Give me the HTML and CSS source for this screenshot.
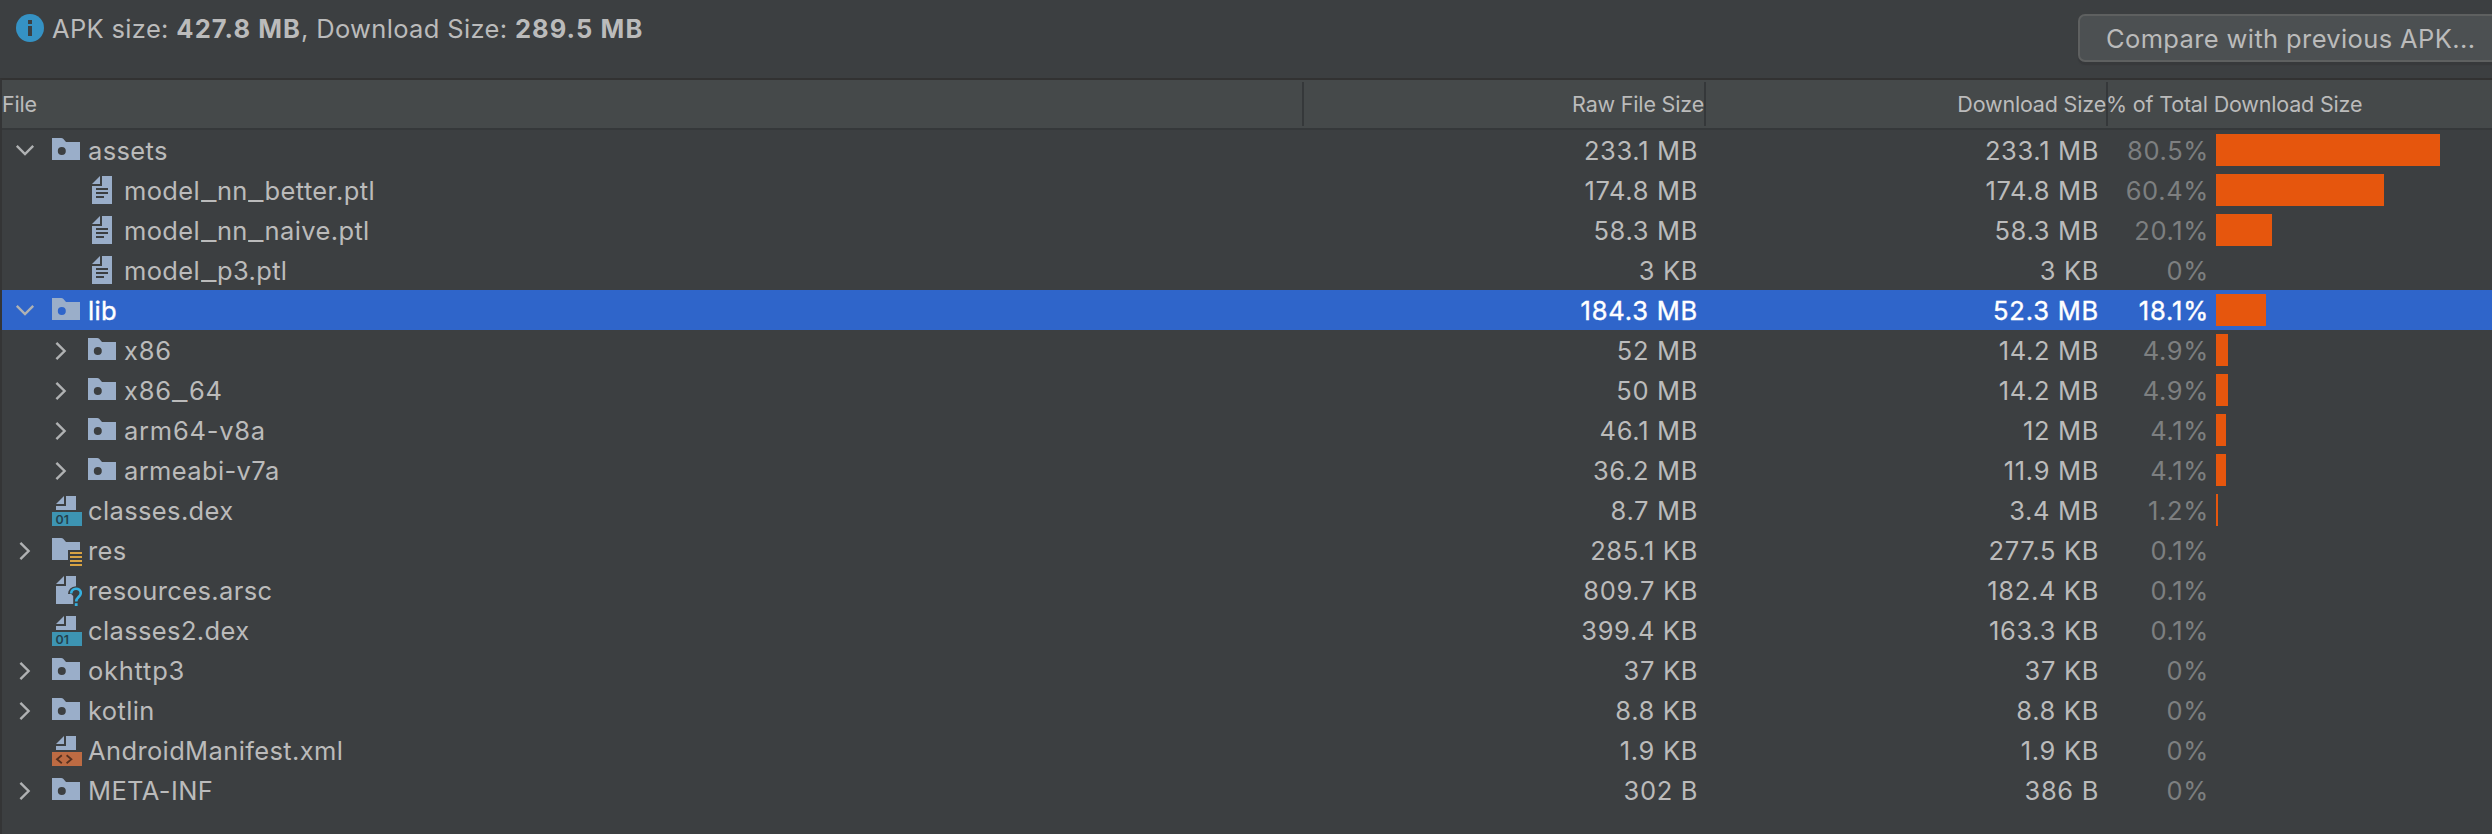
FILE: index.html
```html
<!DOCTYPE html>
<html lang="en">
<head>
<meta charset="utf-8">
<title>APK Analyzer</title>
<link rel="stylesheet" href="styles.css">
</head>
<body>
<svg class="defs" width="0" height="0" aria-hidden="true">
  <symbol id="folder" viewBox="0 0 16 16"><path fill-rule="evenodd" d="M1 2h4.6q.6 0 1 .4L8 4h7v9H1zM5.900 6.500a2 2 0 1 0 0 4a2 2 0 1 0 0-4z"/></symbol>
  <symbol id="file" viewBox="0 0 16 16"><path fill-rule="evenodd" d="M7 1v4H3zM8 1h5v14H3V6h5zM5 7v1h6V7zM5 9v1h6V9zM5 11v1h4v-1z"/></symbol>
  <symbol id="dex" viewBox="0 0 16 16"><path d="M7 1v4H3zM8 1h5v7H3V6h5z"/><path fill="#3d94b2" d="M1 9h15v7H1z"/></symbol>
  <symbol id="res" viewBox="0 0 16 16"><path d="M1 2h4.6q.6 0 1 .4L8 4h7v4H9v5H1z"/><path fill="#d9a343" d="M10 9h6v1h-6zM10 11h6v1h-6zM10 13h6v1h-6zM10 15h6v1h-6z"/></symbol>
  <symbol id="arsc" viewBox="0 0 16 16"><path d="M7 1v4H3zM8 1h5v5.1Q9.3 6.3 9 10h1.6l1 1V15H3V6h5z"/><path class="query" d="M10.600 9.800c0-3.200 4.800-3.200 4.800-.3 0 2-2.300 2-2.300 4.200"/><path fill="#35b1e0" d="M12.400 14.600h1.400V16h-1.400z"/></symbol>
  <symbol id="xml" viewBox="0 0 16 16"><path d="M7 1v4H3zM8 1h5v7H3V6h5z"/><path fill="#bd6b43" d="M1 9h15v7H1z"/><path class="tag" d="M5.900 10.600L3.500 12.600l2.400 2M8.300 10.600l2.400 2-2.400 2"/></symbol>
  <symbol id="down" viewBox="0 0 16 16"><path class="chev" d="M3.900 5.900L8 10l4.100-4.100"/></symbol>
  <symbol id="right" viewBox="0 0 16 16"><path class="chev" d="M5.700 4.400L9.800 8.500l-4.100 4.100"/></symbol>
</svg>

<header class="top">
  <svg class="info" viewBox="0 0 28 28"><circle cx="14" cy="14" r="14" fill="#3592c4"/><path fill="#3c3f41" d="M12 6h4v4h-4zM12 12h4v10h-4z"/></svg>
  <p class="summary">APK size: <b>427.8 MB</b>, Download Size: <b>289.5 MB</b></p>
  <button class="compare">Compare with previous APK...</button>
</header>

<main class="tree">
  <div class="head"><span class="h">File</span><span class="h num">Raw File Size</span><span class="h num">Download Size</span><span class="h">% of Total Download Size</span></div>
  <div class="row"><div class="name"><svg class="arrow"><use href="#down"/></svg><svg class="icon"><use href="#folder"/></svg>assets</div><div class="size">233.1 MB</div><div class="size">233.1 MB</div><div class="pct">80.5%</div><div class="bar" style="width:224px"></div></div>
  <div class="row"><div class="name sub"><svg class="arrow"></svg><svg class="icon"><use href="#file"/></svg><span>model<i>_</i>nn<i>_</i>better.ptl</span></div><div class="size">174.8 MB</div><div class="size">174.8 MB</div><div class="pct">60.4%</div><div class="bar" style="width:168px"></div></div>
  <div class="row"><div class="name sub"><svg class="arrow"></svg><svg class="icon"><use href="#file"/></svg><span>model<i>_</i>nn<i>_</i>naive.ptl</span></div><div class="size">58.3 MB</div><div class="size">58.3 MB</div><div class="pct">20.1%</div><div class="bar" style="width:56px"></div></div>
  <div class="row"><div class="name sub"><svg class="arrow"></svg><svg class="icon"><use href="#file"/></svg><span>model<i>_</i>p3.ptl</span></div><div class="size">3 KB</div><div class="size">3 KB</div><div class="pct">0%</div></div>
  <div class="row selected"><div class="name"><svg class="arrow"><use href="#down"/></svg><svg class="icon"><use href="#folder"/></svg>lib</div><div class="size">184.3 MB</div><div class="size">52.3 MB</div><div class="pct">18.1%</div><div class="bar" style="width:50px"></div></div>
  <div class="row"><div class="name sub digits"><svg class="arrow"><use href="#right"/></svg><svg class="icon"><use href="#folder"/></svg>x86</div><div class="size">52 MB</div><div class="size">14.2 MB</div><div class="pct">4.9%</div><div class="bar" style="width:12px"></div></div>
  <div class="row"><div class="name sub digits"><svg class="arrow"><use href="#right"/></svg><svg class="icon"><use href="#folder"/></svg><span>x86<i>_</i>64</span></div><div class="size">50 MB</div><div class="size">14.2 MB</div><div class="pct">4.9%</div><div class="bar" style="width:12px"></div></div>
  <div class="row"><div class="name sub digits"><svg class="arrow"><use href="#right"/></svg><svg class="icon"><use href="#folder"/></svg>arm64-v8a</div><div class="size">46.1 MB</div><div class="size">12 MB</div><div class="pct">4.1%</div><div class="bar" style="width:10px"></div></div>
  <div class="row"><div class="name sub"><svg class="arrow"><use href="#right"/></svg><svg class="icon"><use href="#folder"/></svg>armeabi-v7a</div><div class="size">36.2 MB</div><div class="size">11.9 MB</div><div class="pct">4.1%</div><div class="bar" style="width:10px"></div></div>
  <div class="row"><div class="name"><svg class="arrow"></svg><svg class="icon" viewBox="0 0 16 16"><use href="#dex"/><text class="glyph" x="2.8" y="14.75">01</text></svg>classes.dex</div><div class="size">8.7 MB</div><div class="size">3.4 MB</div><div class="pct">1.2%</div><div class="bar" style="width:2px"></div></div>
  <div class="row"><div class="name"><svg class="arrow"><use href="#right"/></svg><svg class="icon"><use href="#res"/></svg>res</div><div class="size">285.1 KB</div><div class="size">277.5 KB</div><div class="pct">0.1%</div></div>
  <div class="row"><div class="name"><svg class="arrow"></svg><svg class="icon"><use href="#arsc"/></svg>resources.arsc</div><div class="size">809.7 KB</div><div class="size">182.4 KB</div><div class="pct">0.1%</div></div>
  <div class="row"><div class="name"><svg class="arrow"></svg><svg class="icon" viewBox="0 0 16 16"><use href="#dex"/><text class="glyph" x="2.8" y="14.75">01</text></svg>classes2.dex</div><div class="size">399.4 KB</div><div class="size">163.3 KB</div><div class="pct">0.1%</div></div>
  <div class="row"><div class="name digits"><svg class="arrow"><use href="#right"/></svg><svg class="icon"><use href="#folder"/></svg>okhttp3</div><div class="size">37 KB</div><div class="size">37 KB</div><div class="pct">0%</div></div>
  <div class="row"><div class="name"><svg class="arrow"><use href="#right"/></svg><svg class="icon"><use href="#folder"/></svg>kotlin</div><div class="size">8.8 KB</div><div class="size">8.8 KB</div><div class="pct">0%</div></div>
  <div class="row"><div class="name"><svg class="arrow"></svg><svg class="icon"><use href="#xml"/></svg>AndroidManifest.xml</div><div class="size">1.9 KB</div><div class="size">1.9 KB</div><div class="pct">0%</div></div>
  <div class="row"><div class="name"><svg class="arrow"><use href="#right"/></svg><svg class="icon"><use href="#folder"/></svg>META-INF</div><div class="size">302 B</div><div class="size">386 B</div><div class="pct">0%</div></div>
</main>
</body>
</html>
```
FILE: styles.css
```css
* { box-sizing: border-box; }
html, body { height: 100%; }
body {
  margin: 0;
  display: flex;
  flex-direction: column;
  overflow: hidden;
  background: #3c3f41;
  color: #bbbbbb;
  font-family: Inter, "Liberation Sans", sans-serif;
  font-size: 25.5px;
  letter-spacing: .37px;
  white-space: nowrap;
}
.defs { display: block; height: 0; }
.top {
  flex: none;
  height: 78px;
  padding: 14px 0 0 16px;
  display: flex;
  align-items: flex-start;
}
.info { width: 28px; height: 28px; flex: none; }
.summary { margin: 0 auto 0 8px; line-height: 30px; letter-spacing: .34px; }
.summary b { letter-spacing: 1.08px; }
.compare {
  flex: none;
  width: 424px;
  height: 48px;
  margin-right: -10px;
  padding: 0 0 0 26px;
  border: 2px solid #5e6060;
  border-radius: 7px;
  background: #4c5052;
  box-shadow: 0 3px 1px #37393b;
  color: inherit;
  font: inherit;
  letter-spacing: inherit;
  text-align: left;
}
.tree {
  flex: 1;
  border-top: 2px solid #323232;
  border-left: 2px solid #343536;
}
.head {
  display: grid;
  grid-template-columns: 1302px 402px 402px 1fr;
  height: 50px;
  padding: 2px 0 4px;
  border-bottom: 2px solid #35383a;
  background: #45494a;
  font-size: 21.5px;
  letter-spacing: -.18px;
}
.h { line-height: 44px; margin-left: -2px; border-right: 2px solid #35383a; }
.h:first-child { margin-left: 0; }
.h:last-child { border-right: 0; }
.num { text-align: right; }
.row {
  display: grid;
  grid-template-columns: 1295px 401px 401px 110px 1fr;
  height: 40px;
  align-items: center;
}
.name { display: flex; align-items: center; line-height: 38px; padding-top: 2px; }
.name i {
  display: inline-block;
  margin: 0 2.4px;
  font-style: normal;
  transform: scaleX(1.33);
}
.digits { letter-spacing: .75px; }
.sub { padding-left: 36px; }
.arrow, .icon { width: 32px; height: 32px; flex: none; margin-top: -2px; }
.arrow { margin-left: 7px; margin-right: 9px; }
.icon { margin-right: 6px; fill: #9aaec9; }
.size, .pct { text-align: right; line-height: 38px; padding-top: 2px; letter-spacing: .65px; }
.pct { color: #7d7f80; }
.bar { height: 32px; margin-left: 7px; background: #e6560d; }
.chev { fill: none; stroke: #b0b2b3; stroke-width: 1.2; }
.glyph { font-size: 6.2px; font-weight: 600; letter-spacing: 0; fill: #24414d; }
.tag { fill: none; stroke: #55301f; stroke-width: .9; }
.query { fill: none; stroke: #35b1e0; stroke-width: 1.3; }
.selected { background: #2f65ca; color: #ffffff; }
.selected .size, .selected .pct { color: #ffffff; letter-spacing: .8px; -webkit-text-stroke: .4px #ffffff; }
.selected .name { -webkit-text-stroke: .4px #ffffff; }
```
